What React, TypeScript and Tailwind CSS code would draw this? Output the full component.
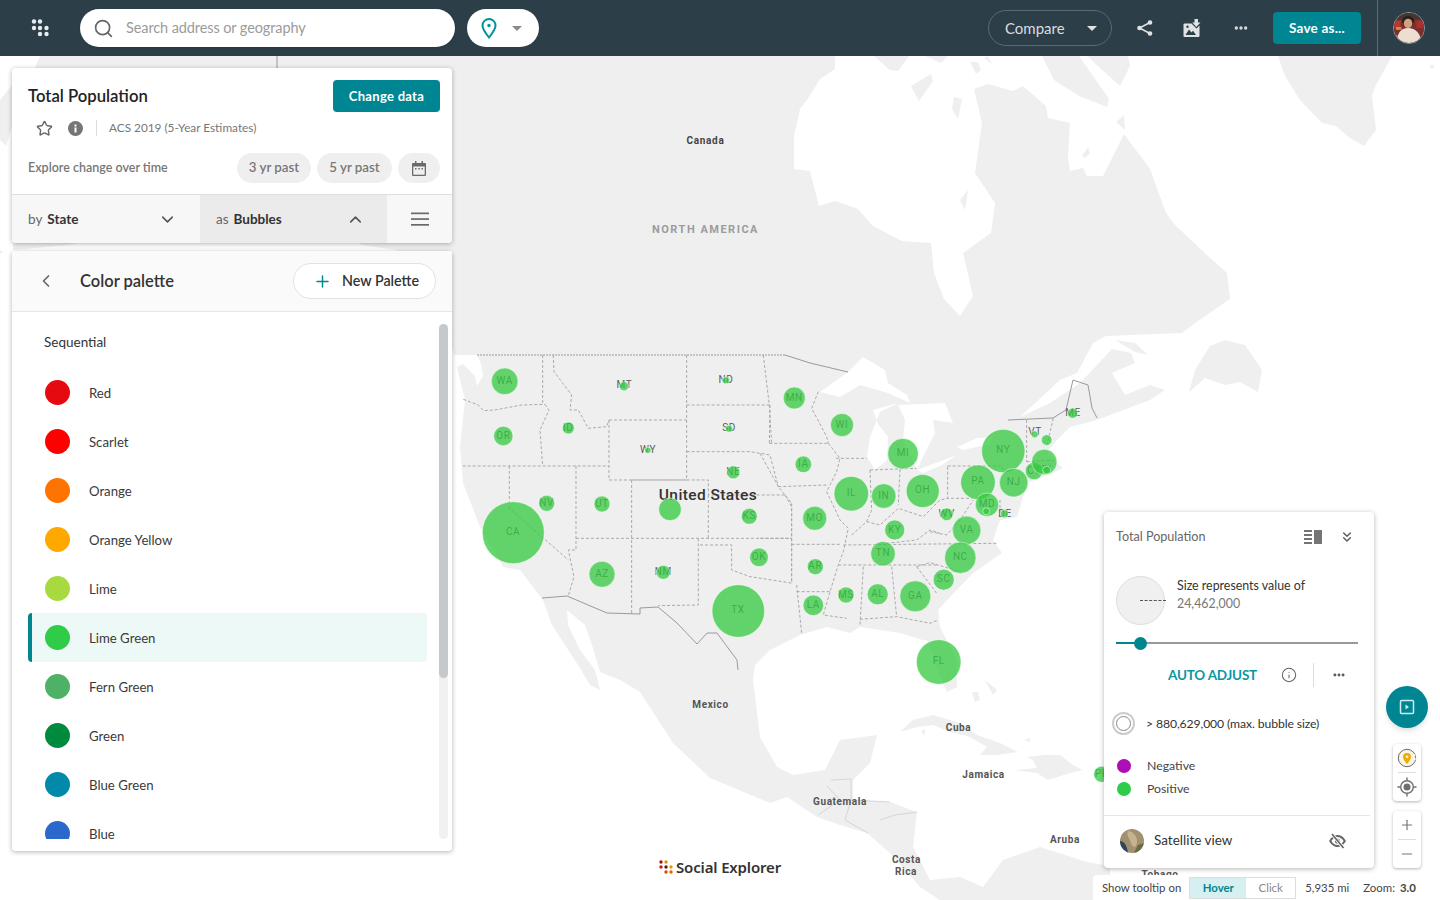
import React from "react";
import { Search, Plus, ChevronDown, ChevronUp, ChevronLeft, ChevronsDown, Star, Info, Minus, Ellipsis } from "lucide-react";

const palette: [string, string][] = [
  ["Red", "#e50a0f"],
  ["Scarlet", "#ff0000"],
  ["Orange", "#ff7300"],
  ["Orange Yellow", "#ffa800"],
  ["Lime", "#a8d93f"],
  ["Lime Green", "#2ecc47"],
  ["Fern Green", "#4fb168"],
  ["Green", "#008a3e"],
  ["Blue Green", "#0089a8"],
  ["Blue", "#2a68cc"],
];

// [label, cx, cy, r, labelX?, labelY?]
const bubbles: [string, number, number, number, number?, number?][] = [
  ["WA", 504.7, 381.3, 13.3],
  ["OR", 503.3, 436, 9.7],
  ["ID", 568.3, 428, 6],
  ["MT", 624, 386.3, 4.5, 624.5, 388],
  ["ND", 726, 380.3, 3.5, 726, 383],
  ["SD", 729, 428.7, 3.5, 729, 431],
  ["WY", 648, 450.3, 3, 648, 453],
  ["NE", 733.3, 472.3, 6.5],
  ["NV", 546.7, 503.3, 8],
  ["UT", 602, 504, 8],
  ["", 670, 509.3, 11.3],
  ["KS", 749.3, 516.3, 8],
  ["CA", 513.3, 532.7, 31, 513, 535],
  ["AZ", 602, 574.3, 13],
  ["NM", 663.3, 572.3, 7],
  ["OK", 759, 557.3, 9.3],
  ["TX", 738.3, 611, 26.3, 738, 613],
  ["MN", 794.3, 398, 11],
  ["WI", 842, 425, 11.5],
  ["IA", 803.3, 464.3, 8.3],
  ["MI", 903, 453.7, 15.3],
  ["IL", 851.3, 493.7, 17.3],
  ["IN", 883.7, 496, 12.3],
  ["OH", 922.7, 491, 16.5, 922.7, 493],
  ["MO", 814.7, 518.3, 12],
  ["KY", 894.7, 530, 10],
  ["WV", 946.7, 514.3, 6.3],
  ["VA", 966.7, 530.3, 14.2],
  ["TN", 883, 553.7, 12.3],
  ["NC", 960.3, 557.7, 15.7, 960.3, 560],
  ["AR", 815.3, 566.7, 8],
  ["SC", 943.7, 579.7, 10.5],
  ["GA", 915.3, 596.3, 15.5],
  ["AL", 877.7, 594.3, 10.5],
  ["MS", 846, 595, 8],
  ["LA", 813.3, 605.3, 10.3],
  ["FL", 938.7, 662, 22.3, 938.7, 663.5],
  ["PA", 978, 482.3, 17.3, 978, 484],
  ["NY", 1003.3, 451, 21.7, 1003.3, 453],
  ["NJ", 1013.7, 482.7, 14.3],
  ["MD", 987, 504.7, 11.7],
  ["DC", 986.3, 511.3, 3.5, 0, 0],
  ["DE", 1004.3, 513.7, 4, 1005, 516.5],
  ["CT", 1034, 471, 8.7],
  ["MA", 1044.3, 462, 12.7, 0, 0],
  ["RI", 1046.7, 470, 4],
  ["NH", 1046.7, 440, 5.3, 0, 0],
  ["VT", 1034.7, 434.3, 3.5, 1035, 435],
  ["ME", 1072.7, 413.3, 5, 1073, 416],
  ["PR", 1101.7, 774.3, 8],
];

const land = `M40,56 L835,56 L835,69 L820,79 L807,100 L800,109 L794,136 L794,169 L810,171 L819,206 L835,201 L858,209 L873,226 L902,241 L931,243 L934,273 L944,299 L960,316 L973,296 L963,253 L991,233 L995,203 L975,173 L982,123 L974,89 L988,84 L1013,91 L1023,86 L1046,106 L1048,118 L1070,123 L1068,156 L1070,171 L1083,168 L1087,176 L1103,176 L1124,134 L1150,169 L1166,213 L1175,225 L1208,256 L1227,273 L1230,299 L1195,323 L1182,333 L1106,336 L1093,343 L1077,373 L1060,380 L1020,417 L1050,403 L1080,383 L1112,349 L1131,353 L1135,363 L1112,373 L1125,395 L1150,385 L1165,390 L1150,400 L1110,415 L1097,420 L1070,427 L1057,440 L1047,452 L1053,460 L1063,468 L1053,473 L1027,483 L1017,517 L1000,520 L993,540 L1002,553 L973,573 L950,597 L938,610 L940,627 L957,660 L957,687 L947,692 L943,683 L927,640 L923,640 L900,633 L860,627 L850,633 L827,627 L800,635 L770,650 L755,665 L753,680 L760,737 L777,767 L793,775 L825,770 L840,740 L877,735 L870,763 L853,780 L853,800 L890,802 L917,812 L913,847 L930,880 L960,877 L983,887 L1003,860 L1040,847 L1087,862 L1110,866 L1110,900 L940,900 L920,887 L890,853 L867,833 L840,825 L817,817 L787,797 L770,803 L710,778 L673,743 L640,692 L620,680 L600,672 L593,648 L585,625 L567,610 L568,625 L580,650 L595,670 L600,690 L590,685 L578,665 L565,645 L552,625 L543,600 L520,570 L503,567 L480,527 L463,483 L460,447 L465,400 L457,367 L453,350 L396,250 L362,245 L300,200 L68,245 L13,250 L12,120 Z`;

const z4Lines = [
  "M40,178 L85,195 L100,212 L135,210 L215,195 L285,193",
  "M278,45 L278,193",
  "M285,193 L297,210 L270,270 L278,378",
  "M310,45 L312,95 L365,165 L360,210 L385,210 L415,265 L470,260 L477,240",
  "M38,378 L477,378",
  "M477,240 L710,240 M477,240 L477,420 L710,420",
  "M710,45 L710,420",
  "M710,195 L958,195",
  "M940,45 L958,195 L965,310",
  "M710,335 L900,335 L960,345 L985,440",
  "M545,420 L775,420 L775,465 L1005,465",
  "M775,465 L775,595",
  "M545,420 L545,820",
  "M378,378 L378,630 L355,630 L372,710 L355,768",
  "M178,378 L178,505 L355,660",
  "M378,595 L1025,595",
  "M745,595 L745,795 L625,797",
  "M750,615 L845,615 L845,690 L900,710 L1030,730",
  "M1005,465 L1025,500 L1025,730",
];
const z5Lines = [
  "M28,310 L205,310",
  "M175,155 L155,205 L200,290 L205,310",
  "M30,195 L28,310",
  "M0,340 L55,440 L95,490",
  "M55,440 L200,435",
  "M205,310 L240,355 L230,395 L200,455 L240,540 L265,565 L250,635 L235,675 L210,755 L190,825 L260,835",
  "M228,355 L320,355",
  "M330,390 L335,510 L320,545 L275,585",
  "M330,390 L470,385",
  "M420,388 L415,495",
  "M320,545 L360,555 L415,505 L490,530 L540,480 L565,475",
  "M563,380 L563,475 L660,475",
  "M563,378 L725,378 L735,400",
  "M95,490 L95,730 M95,613 L245,613",
  "M110,755 L210,755",
  "M110,735 L125,880",
  "M310,680 L300,855",
  "M235,675 L530,675",
  "M250,615 L715,610",
  "M395,680 L410,830",
  "M300,838 L410,830 L510,850 L535,840",
  "M470,680 L530,760",
  "M470,680 L510,668 L550,680 L600,695",
  "M380,610 L470,600 L510,570 L540,580",
  "M510,575 L560,585 L600,540 L640,480",
  "M800,240 L800,365",
  "M880,235 L860,320",
  "M800,365 L890,360",
  "M720,480 L720,530",
  "M0,595 L95,595",
];

function MapCanvas() {
  return (
    <svg className="absolute left-0 top-0" width="1440" height="900" viewBox="0 0 1440 900">
      <rect width="1440" height="900" fill="#ffffff" />
      <path d={land} fill="#efefef" />
      <g fill="#efefef">
        <path d="M0,100 L12,85 L14,120 L6,146 L0,140 Z" />
        <path d="M0,250 L3,252 L0,254 Z" />
        <path d="M874,56 L909,56 L898,71 L890,70 Z" />
        <path d="M911,86 L931,74 L933,81 L919,101 Z" />
        <path d="M952,109 L954,97 L962,99 L958,119 Z" />
        <path d="M970,62 L978,62 L981,70 L976,74 Z" />
        <path d="M925,56 L948,56 L941,63 Z" />
        <path d="M984,58 L988,56 L992,64 Z" />
        <path d="M1042,56 L1079,56 L1109,99 L1107,107 L1079,96 L1054,80 Z" />
        <path d="M1087,56 L1128,56 L1130,66 L1120,86 Z" />
        <path d="M1116,122 L1124,115 L1125,130 Z" />
        <path d="M1082,156 L1088,147 L1090,153 L1085,158 Z" />
        <path d="M1278,56 L1392,56 L1376,85 L1372,95 L1376,130 L1364,146 L1350,138 L1336,126 L1322,123 L1300,100 L1285,76 Z" />
        <path d="M1430,65 L1434,65 L1434,68 L1430,68 Z" />
        <path d="M1189,392 L1195,370 L1210,346 L1225,340 L1245,345 L1262,370 L1258,392 L1240,382 L1225,385 L1205,378 Z" />
        <path d="M1115,340 L1135,343 L1148,355 L1135,352 Z" />
        <path d="M960,200 L968,190 L965,210 Z" />
        <path d="M900,732 L913,720 L933,715 L960,723 L977,735 L1000,743 L1018,752 L997,755 L980,755 L987,747 L970,737 L950,732 L933,725 L917,727 Z" />
        <path d="M921,731 L925,729 L925,736 Z" />
        <path d="M1026,757 L1045,755 L1060,755 L1073,765 L1083,770 L1070,773 L1048,780 L1037,773 L1015,770 L1037,768 L1033,760 Z" />
        <path d="M973,772 L990,771 L993,775 L980,777 Z" />
        <path d="M972,692 L978,692 L980,700 L975,702 Z" />
        <path d="M985,680 L997,690 L993,695 Z" />
        <path d="M1024,740 L1030,738 L1030,742 Z" />
      </g>
      {/* Great Lakes and sounds */}
      <g fill="#ffffff">
        <path d="M820,392 L848,372 L863,357 L885,370 L888,383 L907,395 L910,403 L888,393 L860,385 L840,397 Z" />
        <path d="M873,410 L898,403 L880,412 L870,437 L867,457 L875,470 L887,460 L888,437 L878,424 Z" />
        <path d="M898,405 L945,403 L953,423 L933,420 L935,433 L923,457 L917,470 L903,440 L905,420 Z" />
        <path d="M917,470 L957,455 L942,465 L923,473 Z" />
        <path d="M957,447 L977,438 L993,437 L990,444 L963,450 Z" />
        <path d="M453,355 L477,355 L481,364 L483,376 L477,386 L475,376 L463,364 L457,367 Z" />
      </g>
      <g stroke="#9a9a9a" strokeWidth="1" fill="none">
        <path d="M477,355 L785,355" strokeDasharray="2 1" />
        <path d="M785,355 L810,363 L848,372" />
        <path d="M1008,420 L1053,418 L1066,410 L1073,380 L1088,385 L1092,408 L1097,418" />
        <path d="M542,598 L567,596 L607,613 L640,614 L640,608 L658,607 L677,623 L697,644 L707,633 L717,633 L737,660 L738,670" />
        <path d="M277,56 L277,68" />
      </g>
      <g stroke="#d6d6d6" strokeWidth="1" fill="none">
        <path d="M831,780 L851,779 L851,800" />
        <path d="M827,786 L840,800 L818,815 M851,800 L890,802" />
        <path d="M880,820 L895,815 L917,812" />
        <path d="M851,800 L845,820 L868,833" />
      </g>
      <g fill="none" stroke="#aaaaaa" strokeWidth="1" strokeDasharray="3 2">
        <g transform="translate(450 340) scale(.3333)">
          {z4Lines.map((d, i) => (
            <path key={i} d={d} vectorEffect="non-scaling-stroke" />
          ))}
        </g>
        <g transform="translate(760 340) scale(.3333)">
          {z5Lines.map((d, i) => (
            <path key={i} d={d} vectorEffect="non-scaling-stroke" />
          ))}
        </g>
      </g>
      <g style={{ fontFamily: "Roboto, sans-serif" }} textAnchor="middle">
        <text x="705.5" y="144" fontSize="10" fontWeight="700" letterSpacing=".7" fill="#444">Canada</text>
        <text x="705.5" y="233" fontSize="11" fontWeight="700" letterSpacing="1.5" fill="#9c9c9c">NORTH AMERICA</text>
        <text x="708" y="500" fontSize="15.5" fontWeight="500" letterSpacing=".4" fill="#333">United States</text>
        <text x="710.5" y="708" fontSize="10" fontWeight="700" letterSpacing=".6" fill="#555">Mexico</text>
        <text x="958.5" y="731" fontSize="10" fontWeight="700" letterSpacing=".6" fill="#555">Cuba</text>
        <text x="983.5" y="778" fontSize="10" fontWeight="700" letterSpacing=".6" fill="#555">Jamaica</text>
        <text x="840" y="805" fontSize="10" fontWeight="700" letterSpacing=".6" fill="#555">Guatemala</text>
        <text x="906.5" y="863" fontSize="10" fontWeight="700" letterSpacing=".6" fill="#555">Costa</text>
        <text x="906" y="875" fontSize="10" fontWeight="700" letterSpacing=".6" fill="#555">Rica</text>
        <text x="1065" y="843" fontSize="10" fontWeight="700" letterSpacing=".6" fill="#555">Aruba</text>
        <text x="1160" y="878" fontSize="10" fontWeight="700" letterSpacing=".6" fill="#555">Tobago</text>
        {bubbles.map(([l, cx, cy, , lx, ly]) =>
          l && lx !== 0 ? (
            <text key={l} x={lx ?? cx} y={ly ?? cy + 2.5} fontSize="10" letterSpacing=".6" fill="#5a5a5a">{l}</text>
          ) : null
        )}
      </g>
      <g>
        {bubbles.map(([l, cx, cy, r]) => (
          <circle key={l + cx} cx={cx} cy={cy} r={r} fill="#33c93f" fillOpacity=".75" stroke="#ffffff" strokeOpacity=".7" strokeWidth=".7" />
        ))}
      </g>
    </svg>
  );
}

function GridDots() {
  return (
    <svg width="20" height="20" viewBox="0 0 20 20" fill="#e8ecee">
      <circle cx="4" cy="3.5" r="2.2" /><circle cx="10" cy="3.5" r="2.2" />
      <circle cx="4" cy="10" r="2.2" /><circle cx="10" cy="10" r="2.2" /><circle cx="16.5" cy="10" r="2.2" />
      <circle cx="10" cy="16" r="2.2" /><circle cx="16.5" cy="16" r="2.2" />
    </svg>
  );
}
function Pin() {
  return (
    <svg width="18" height="22" viewBox="0 0 18 22" fill="none" stroke="#00939f" strokeWidth="2">
      <path d="M9 20.5C5 15.5 2.5 12 2.5 8.5a6.5 6.5 0 0 1 13 0C15.500 12 13 15.500 9 20.500Z" />
      <circle cx="9" cy="8.500" r="1.700" fill="#00939f" stroke="none" />
    </svg>
  );
}
function Caret({ color = "#8a8a8a" }: { color?: string }) {
  return (
    <svg width="10" height="5" viewBox="0 0 10 5"><path d="M0 0h10L5 5z" fill={color} /></svg>
  );
}
function Share() {
  return (
    <svg width="18" height="18" viewBox="0 0 18 18" fill="#dfe3e5" stroke="#dfe3e5">
      <circle cx="14" cy="3.500" r="2.300" stroke="none" /><circle cx="3.500" cy="9" r="2.300" stroke="none" /><circle cx="14" cy="14.500" r="2.300" stroke="none" />
      <path d="M14 3.500 3.500 9 14 14.500" fill="none" strokeWidth="1.500" />
    </svg>
  );
}
function ImageDown() {
  return (
    <svg width="18" height="18" viewBox="0 0 18 18" fill="#dfe3e5">
      <path d="M1.500 4.500H8.500L13.500 9.500 16.500 6.500V17a1 1 0 0 1-1 1h-14a1 1 0 0 1-1-1V5.500a1 1 0 0 1 1-1z" />
      <path d="M11.500 0h3.500v3.500h2.500L13.300 8 9.200 3.500h2.300z" />
      <path d="M2.500 16l3.500-5.500 2.500 3 1.500-1.800 3 4.300z" fill="#2c3e48" />
      <circle cx="4.500" cy="7.800" r="1.200" fill="#2c3e48" />
    </svg>
  );
}
function Avatar() {
  return (
    <svg width="32" height="32" viewBox="0 0 32 32" className="rounded-full border border-[#8c9aa2]">
      <rect width="32" height="32" fill="#7c2f2c" />
      <rect y="0" width="32" height="7" fill="#453633" />
      <rect x="0" y="8" width="7" height="8" fill="#b23a2f" />
      <rect x="24" y="8" width="8" height="8" fill="#a9302c" />
      <rect x="2" y="15" width="6" height="3" fill="#d08a50" />
      <ellipse cx="15" cy="8.500" rx="6.500" ry="5.500" fill="#2f1f1b" />
      <ellipse cx="15" cy="11" rx="4.500" ry="5" fill="#d2a083" />
      <path d="M3 32c0-10 4-16 12-16s14 6 14 16z" fill="#ecdfd2" />
      <path d="M0 32c0-4 1-7 3-9l3 9z" fill="#c98a6a" />
    </svg>
  );
}
function InfoFilled() {
  return (
    <svg width="15" height="15" viewBox="0 0 15 15">
      <circle cx="7.500" cy="7.500" r="7.500" fill="#757575" />
      <rect x="6.500" y="6.500" width="2" height="5" fill="#fff" />
      <rect x="6.500" y="3.500" width="2" height="2" fill="#fff" />
    </svg>
  );
}
function CalendarIcon() {
  return (
    <svg width="14" height="15" viewBox="0 0 14 15" fill="#6a6a6a">
      <path d="M3 0h1.500v2h5V0H11v2h2a1 1 0 0 1 1 1v11a1 1 0 0 1-1 1H1a1 1 0 0 1-1-1V3a1 1 0 0 1 1-1h2zM1.300 5.500v8.200h11.400V5.500z" />
      <rect x="3" y="7" width="1.500" height="1.500" />
      <rect x="6.300" y="7" width="1.500" height="1.500" />
      <rect x="9.500" y="7" width="1.500" height="1.500" />
    </svg>
  );
}
function Lines() {
  return (
    <svg width="20" height="14" viewBox="0 0 20 14" fill="#6a6a6a">
      <rect x="1" y="0.500" width="18" height="1.700" />
      <rect x="1" y="6.200" width="18" height="1.700" />
      <rect x="1" y="12" width="18" height="1.700" />
    </svg>
  );
}
function LegendToggle() {
  return (
    <svg width="18" height="14" viewBox="0 0 18 14" fill="#757575">
      <rect x="0" y="0" width="8" height="2" /><rect x="0" y="4" width="8" height="2" /><rect x="0" y="8" width="8" height="2" /><rect x="0" y="12" width="8" height="2" />
      <rect x="10" y="0" width="8" height="14" />
    </svg>
  );
}
function SatelliteThumb() {
  return (
    <svg width="24" height="24" viewBox="0 0 24 24" className="rounded-full">
      <rect width="24" height="24" fill="#a29070" />
      <path d="M0 12c4 0 7 4 8 12H0z" fill="#2d4560" />
      <path d="M8 2c5 0 10 6 9 12s-5 4-6 0-5-8-3-12z" fill="#c4b48e" />
      <path d="M18 16l6-2v10H14z" fill="#6a6a48" />
    </svg>
  );
}
function EyeSlash() {
  return (
    <svg width="17" height="16" viewBox="0 0 17 16">
      <path d="M1.200 8c2-3.300 4.400-5 7.300-5s5.300 1.700 7.300 5c-2 3.300-4.400 5-7.300 5s-5.300-1.700-7.300-5z" fill="none" stroke="#666" strokeWidth="2" />
      <circle cx="8.500" cy="8" r="2.600" fill="#666" />
      <path d="M3 1l11.500 14" stroke="#fff" strokeWidth="3.500" />
      <path d="M3 1l11.500 14" stroke="#666" strokeWidth="1.700" />
    </svg>
  );
}
function LocationBulb() {
  return (
    <svg width="20" height="20" viewBox="0 0 20 20">
      <circle cx="10" cy="10" r="8.700" fill="#faf4e4" stroke="#6b6b6b" strokeWidth="1" />
      <path d="M10 16c-2.800-3.500-4-5.200-4-7a4 4 0 0 1 8 0c0 1.800-1.200 3.500-4 7z" fill="#edab00" />
      <circle cx="10" cy="8.800" r="1.400" fill="#faf4e4" />
      <path d="M17 6.500A9 9 0 0 1 17 13.500" stroke="#fff" strokeWidth="2" fill="none" strokeDasharray="2 1.500" />
    </svg>
  );
}
function Locate() {
  return (
    <svg width="20" height="20" viewBox="0 0 20 20" fill="none" stroke="#6f6f6f" strokeWidth="1.400">
      <circle cx="10" cy="10" r="6.300" />
      <circle cx="10" cy="10" r="3.500" fill="#6f6f6f" stroke="none" />
      <path d="M10 0.500v3M10 16.500v3M0.500 10h3M16.500 10h3" />
    </svg>
  );
}
function PlayBox() {
  return (
    <svg width="16" height="16" viewBox="0 0 16 16" fill="none" stroke="#cfeef0" strokeWidth="1.500">
      <rect x="1.500" y="1.500" width="13" height="13" rx="1" />
      <path d="M6.500 5.500v5l3.500-2.500z" fill="#cfeef0" stroke="none" />
    </svg>
  );
}

export default function App() {
  return (
    <div className="relative flex h-[900px] w-[1440px] flex-col overflow-hidden bg-white font-[family-name:Lato,sans-serif] text-[#333]">
      {/* Top bar */}
      <header className="z-20 flex h-14 shrink-0 items-center bg-[#2c3e48]">
        <div className="ml-[30px] flex w-5 shrink-0"><GridDots /></div>
        <div className="ml-[30px] flex h-[38px] w-[375px] items-center rounded-full bg-white pl-[13px] shadow-sm">
          <Search size={21} className="text-[#666]" strokeWidth={1.9} />
          <span className="ml-3 text-[14.5px] tracking-[-0.1px] text-[#9b9b9b]">Search address or geography</span>
        </div>
        <div className="ml-3 flex h-[38px] w-[72px] items-center rounded-full bg-white pl-[13px]">
          <Pin />
          <span className="ml-[14px]"><Caret /></span>
        </div>
        <div className="ml-auto flex h-9 w-[124px] items-center rounded-full border border-[#5b6b74] pl-4 text-[15px] text-[#d8dde0]">
          Compare
          <span className="ml-auto mr-[14px] flex"><Caret color="#dfe3e5" /></span>
        </div>
        <div className="ml-6 flex w-[18px]"><Share /></div>
        <div className="ml-[29px] flex w-[18px]"><ImageDown /></div>
        <div className="ml-[32px] flex"><Ellipsis size={16} className="text-[#dfe3e5]" strokeWidth={3} /></div>
        <button className="ml-6 h-8 w-[88px] rounded-sm bg-[#008693] text-[13.5px] font-bold tracking-[.2px] text-white">Save as...</button>
        <div className="ml-4 flex h-14 w-[63px] items-center border-l border-[#5b6b74] pl-[15px]"><Avatar /></div>
      </header>

      {/* Map area */}
      <div className="relative flex-1">
        <div className="absolute -top-14 left-0"><MapCanvas /></div>

        {/* Left column */}
        <div className="absolute left-3 top-3 flex w-[440px] flex-col gap-2">
          <section className="flex h-[175px] flex-col overflow-hidden rounded-sm bg-white shadow-[0_1px_5px_rgba(0,0,0,.3)]">
            <div className="flex items-start justify-between pl-4 pr-3 pt-3">
              <h1 className="mt-[5px] text-[16.7px] font-semibold leading-[22px] text-[#222]">Total Population</h1>
              <button className="h-8 w-[107px] rounded-sm bg-[#008693] pt-px text-[13px] font-bold tracking-[.3px] text-white">Change data</button>
            </div>
            <div className="mt-[5px] flex h-[22px] items-center pl-6">
              <Star size={17} className="text-[#666]" strokeWidth={2} />
              <span className="ml-[15px] flex"><InfoFilled /></span>
              <span className="ml-[13px] h-4 w-px bg-[#ddd]" />
              <span className="ml-3 text-[11.8px] text-[#777]">ACS 2019 (5-Year Estimates)</span>
            </div>
            <div className="mt-[14px] flex items-center pl-4 pr-3">
              <span className="text-[12.5px] font-semibold text-[#777]">Explore change over time</span>
              <div className="ml-auto flex items-center gap-[6px]">
                <span className="flex h-[30px] w-[74px] items-center justify-center rounded-full bg-[#efefef] text-[13.3px] font-semibold text-[#777]">3 yr past</span>
                <span className="flex h-[30px] w-[75px] items-center justify-center rounded-full bg-[#efefef] text-[13.3px] font-semibold text-[#777]">5 yr past</span>
                <span className="flex h-[30px] w-[42px] items-center justify-center rounded-full bg-[#efefef]"><CalendarIcon /></span>
              </div>
            </div>
            <div className="mt-[11px] flex h-[49px] items-stretch border-t border-[#dedede] bg-[#f7f7f7]">
              <div className="flex w-[188px] items-center pl-4 pr-[23px] text-[13.5px]">
                <span className="text-[#666]">by</span>
                <span className="ml-[5px] font-bold text-[#333]">State</span>
                <ChevronDown size={19} className="ml-auto text-[#555]" strokeWidth={2} />
              </div>
              <div className="flex w-[187px] items-center bg-[#ebebeb] pl-4 pr-[22px] text-[13.5px]">
                <span className="text-[#666]">as</span>
                <span className="ml-[5px] font-bold text-[#333]">Bubbles</span>
                <ChevronUp size={19} className="ml-auto text-[#555]" strokeWidth={2} />
              </div>
              <div className="flex flex-1 items-center justify-center pl-px"><Lines /></div>
            </div>
          </section>

          <section className="flex h-[600px] flex-col rounded-sm bg-white pb-3 shadow-[0_1px_5px_rgba(0,0,0,.3)]">
            <div className="flex h-[61px] shrink-0 items-center border-b border-[#e6e6e6] bg-[#fafafa] pl-6 pr-4">
              <ChevronLeft size={20} className="text-[#666]" strokeWidth={2} />
              <h2 className="ml-6 text-[16.5px] font-semibold text-[#333]">Color palette</h2>
              <button className="ml-auto flex h-9 w-[143px] items-center rounded-full border border-[#e2e2e2] bg-white pl-[19px] text-[14.3px] font-semibold text-[#333]">
                <Plus size={19} className="text-[#00868f]" strokeWidth={1.8} />
                <span className="ml-[10px]">New Palette</span>
              </button>
            </div>
            <div className="flex min-h-0 flex-1 pt-3">
              <div className="min-w-0 flex-1 overflow-hidden pl-4">
                <div className="flex h-[44px] items-center pb-2 pl-4 text-[13.5px] text-[#333]">Sequential</div>
                {palette.map(([name, color]) => {
                  const selected = name === "Lime Green";
                  return (
                    <div key={name} className={selected ? "flex h-[49px] w-[399px] items-center rounded-sm border-l-4 border-[#00868f] bg-[#edf9f7] pl-[12.5px] text-[13.2px]" : "flex h-[49px] w-[399px] items-center border-l-4 border-transparent pl-[12.5px] text-[13.2px]"}>
                      <span className="h-[25px] w-[25px] shrink-0 rounded-full" style={{ backgroundColor: color }} />
                      <span className="ml-[19.5px] mt-0.5 text-[#3a3a3a]">{name}</span>
                    </div>
                  );
                })}
              </div>
              <div className="mr-1 w-[9px] shrink-0 rounded-full bg-[#f1f1f1]">
                <div className="h-[354px] rounded-full bg-[#c6c9cc]" />
              </div>
            </div>
          </section>
        </div>

        {/* Logo */}
        <div className="absolute left-[659px] top-[804px] flex items-center gap-[2px]">
          <svg width="15" height="15" viewBox="0 0 15 15">
            <circle cx="2" cy="2" r="1.700" fill="#a81010" /><circle cx="7" cy="2" r="1.700" fill="#d09a00" />
            <circle cx="2" cy="7" r="1.700" fill="#c81818" /><circle cx="7" cy="7" r="1.700" fill="#701010" /><circle cx="12" cy="7" r="1.700" fill="#d8a000" />
            <circle cx="7" cy="12" r="1.700" fill="#d84c00" /><circle cx="12" cy="12" r="1.700" fill="#e86000" />
          </svg>
          <span className="text-[15px] font-semibold leading-none tracking-[-0.15px] text-[#333] font-[family-name:'Noto_Sans',sans-serif]">Social Explorer</span>
        </div>

        {/* Legend */}
        <section className="absolute left-[1104px] top-[456px] flex h-[356px] w-[270px] flex-col rounded-sm bg-white shadow-[0_1px_5px_rgba(0,0,0,.3)]">
          <div className="flex h-[49px] shrink-0 items-center pl-3 pr-[19px]">
            <span className="mt-0.5 text-[12.6px] text-[#666]">Total Population</span>
            <span className="ml-auto flex"><LegendToggle /></span>
            <ChevronsDown size={16} className="ml-[17px] text-[#555]" strokeWidth={2} />
          </div>
          <div className="mt-[15px] flex items-start pl-3">
            <div className="relative h-[49px] w-[49px] shrink-0 rounded-full border border-[#ddd] bg-[#f0f0f0]">
              <span className="absolute left-[23px] top-[23px] w-[26px] border-t border-dashed border-[#555]" />
            </div>
            <div className="ml-3 mt-[1px] text-[12.4px] leading-[18px]">
              <div className="text-[#333]">Size represents value of</div>
              <div className="text-[#777]">24,462,000</div>
            </div>
          </div>
          <div className="relative mx-3 mt-[17px] h-0.5 w-[242px] bg-[#999]">
            <span className="absolute left-0 top-0 block h-0.5 w-[25px] bg-[#00868f]" />
            <span className="absolute -top-[5.5px] left-[18px] block h-[13px] w-[13px] rounded-full bg-[#00868f]" />
          </div>
          <div className="mt-[19px] flex h-6 items-center pl-16">
            <span className="text-[13.5px] font-bold tracking-[-0.2px] text-[#0a97a3]">AUTO ADJUST</span>
            <Info size={16} className="ml-6 text-[#666]" strokeWidth={1.6} />
            <span className="ml-4 h-6 w-px bg-[#ddd]" />
            <Ellipsis size={14} className="ml-[18px] text-[#555]" strokeWidth={3} />
          </div>
          <div className="mt-[25px] flex items-center pl-2">
            <span className="flex h-[23px] w-[23px] items-center justify-center rounded-full border-2 border-[#ccc]">
              <span className="h-[15px] w-[15px] rounded-full border border-[#888]" />
            </span>
            <span className="ml-[11px] mt-0.5 text-[12.2px] tracking-[-0.1px] text-[#333]">&gt; 880,629,000 (max. bubble size)</span>
          </div>
          <div className="mt-[22px] flex flex-col gap-[5px] pl-[13px] text-[12.3px] text-[#444]">
            <div className="flex h-[18px] items-center"><span className="h-[14px] w-[14px] rounded-full bg-[#ab0fb5]" /><span className="ml-4">Negative</span></div>
            <div className="flex h-[18px] items-center"><span className="h-[14px] w-[14px] rounded-full bg-[#2ecc47]" /><span className="ml-4">Positive</span></div>
          </div>
          <div className="mr-1 mt-[17px] flex flex-1 items-center border-t border-[#e6e6e6] pb-[3px] pl-4 pr-6">
            <SatelliteThumb />
            <span className="ml-[10px] text-[13.5px] text-[#333]">Satellite view</span>
            <span className="ml-auto flex"><EyeSlash /></span>
          </div>
        </section>

        {/* Map controls */}
        <div className="absolute left-[1386px] top-[630px] flex w-[42px] flex-col items-center">
          <button className="flex h-[42px] w-[42px] items-center justify-center rounded-full bg-[#008693] shadow-md"><PlayBox /></button>
          <div className="mt-[16px] flex h-[57px] w-7 flex-col items-center rounded-sm bg-white shadow-[0_1px_3px_rgba(0,0,0,.3)]">
            <div className="flex h-7 items-center"><LocationBulb /></div>
            <span className="h-px w-[18px] bg-[#ddd]" />
            <div className="flex flex-1 items-center"><Locate /></div>
          </div>
          <div className="mt-[10px] flex h-[57px] w-7 flex-col items-center rounded-sm bg-white shadow-[0_1px_3px_rgba(0,0,0,.3)]">
            <div className="flex h-7 items-center"><Plus size={16} className="text-[#777]" strokeWidth={1.800} /></div>
            <span className="h-px w-[18px] bg-[#ddd]" />
            <div className="flex flex-1 items-center"><Minus size={16} className="text-[#777]" strokeWidth={1.800} /></div>
          </div>
        </div>

        {/* Bottom bar */}
        <div className="absolute left-[1093px] top-[819px] flex h-[25px] w-[347px] items-center rounded-tl-sm bg-white pl-[9px] pt-px text-[11.4px] text-[#444]">
          <span>Show tooltip on</span>
          <div className="ml-2 flex h-[22px] border border-[#ddd]">
            <span className="flex w-[56px] items-center justify-center bg-[#d6eff1] font-bold text-[#00868f]">Hover</span>
            <span className="flex w-[49px] items-center justify-center text-[#888]">Click</span>
          </div>
          <span className="ml-[9px]">5,935 mi</span>
          <span className="ml-[14px]">Zoom:</span>
          <span className="ml-[5px] font-bold">3.0</span>
        </div>
      </div>
    </div>
  );
}
